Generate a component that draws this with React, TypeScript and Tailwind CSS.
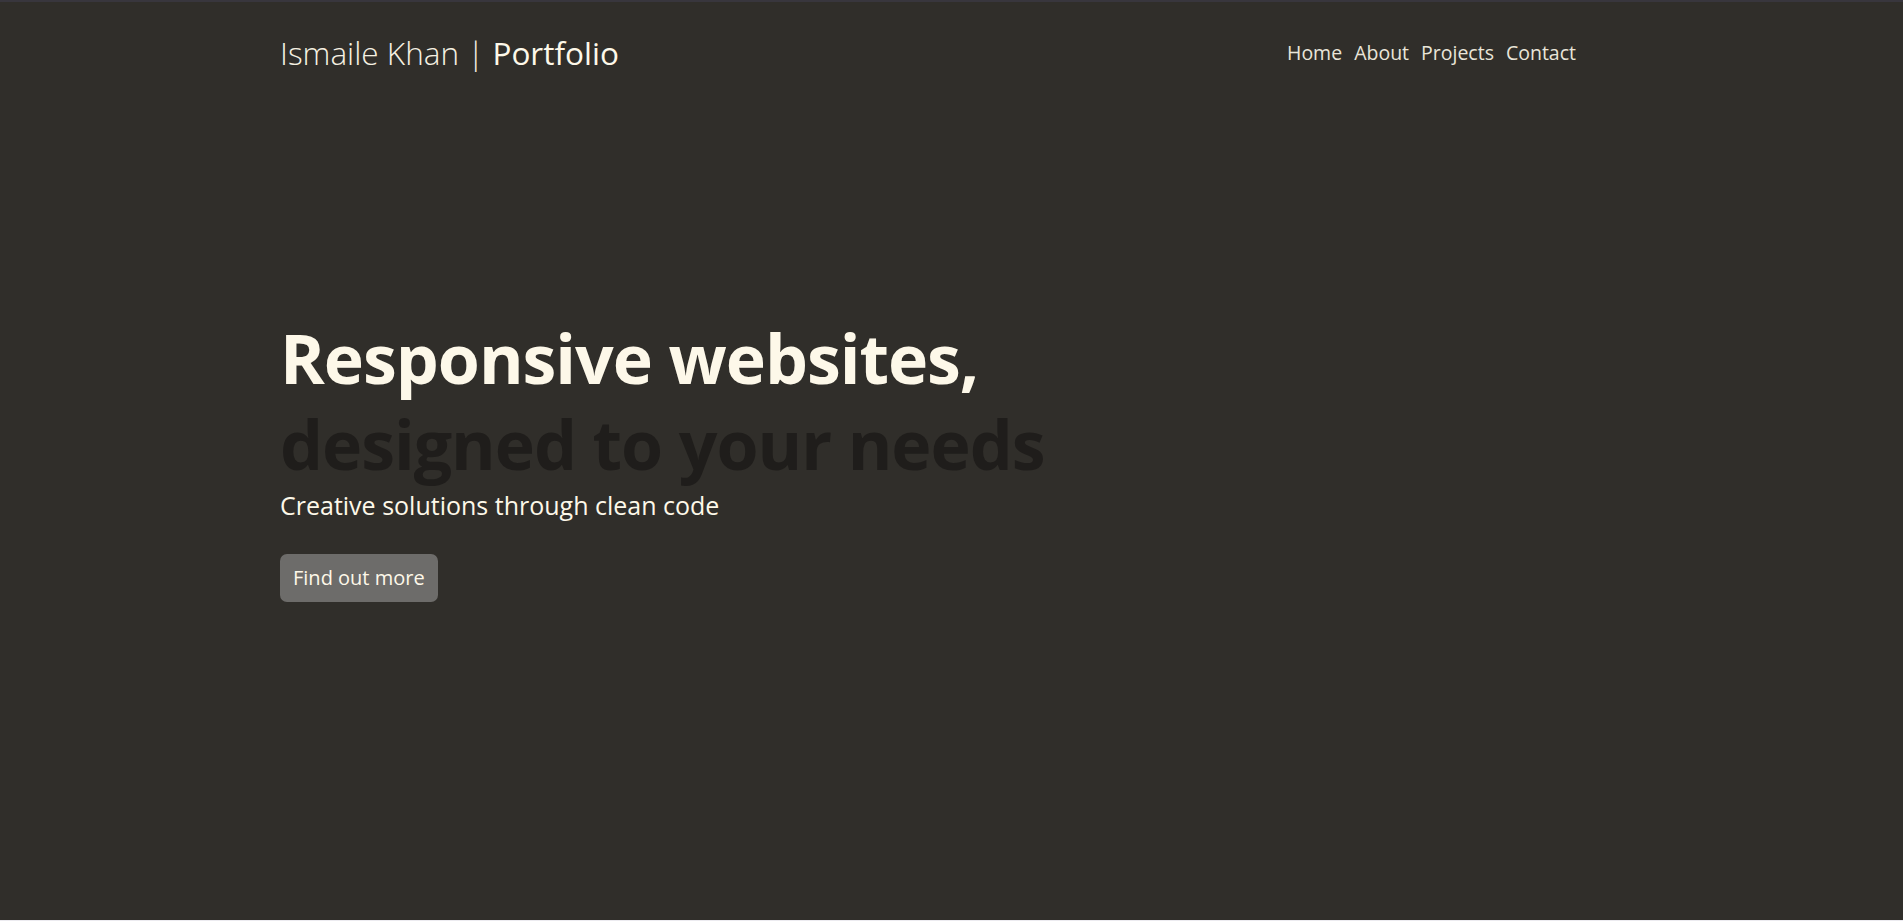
import React from "react";

const NAV = ["Home", "About", "Projects", "Contact"];

export default function App() {
  return (
    <div
      className="min-h-screen bg-[#ecebf0]"
      style={{ fontFamily: '"Open Sans", "Noto Sans", sans-serif' }}
    >
      <section className="h-[920px] border-t-2 border-[#38363d] bg-[#302e2a]">
        <header className="mx-auto flex w-[1343px] items-center justify-between pt-[27px]">
          <a className="text-[31.5px] leading-[48px] font-light text-[#f6f1e2]">
            Ismaile Khan | <span className="font-medium text-[#fdf8e9]">Portfolio</span>
          </a>
          <nav className="mr-[47px] flex gap-[12px] text-[19.5px] text-[#e9e5d9]">
            {NAV.map((n) => (
              <a key={n}>{n}</a>
            ))}
          </nav>
        </header>

        <main className="mx-auto w-[1343px] pt-[238px]">
          <h1 className="text-[68px] leading-[86px] font-bold tracking-[-0.015em]">
            <span className="block text-[#fdf8e9]">Responsive websites,</span>
            <span className="block text-[#1f1d1b]">designed to your needs</span>
          </h1>
          <p className="mt-[3px] text-[25px] leading-[30px] text-[#fdf8e9]">
            Creative solutions through clean code
          </p>
          <button className="mt-[34px] h-[48px] rounded-[7px] bg-[#6d6c6a] px-[13px] text-[20px] text-[#fdf8e9]">
            Find out more
          </button>
        </main>
      </section>
    </div>
  );
}
